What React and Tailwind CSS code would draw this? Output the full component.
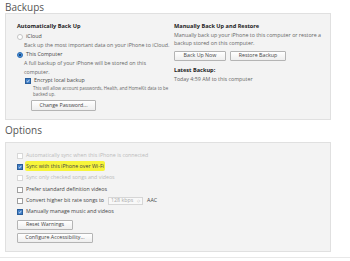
import React from "react";

const Radio = ({ checked }) =>
  checked ? (
    <span className="w-[6px] h-[6px] rounded-full bg-[#4a90d9] border border-[#2f6fb5] flex items-center justify-center shrink-0">
      <span className="w-[2px] h-[2px] rounded-full bg-[#12335a]" />
    </span>
  ) : (
    <span className="w-[6px] h-[6px] rounded-full bg-white border border-[#c4c4c4] shrink-0" />
  );

const Check = ({ checked, disabled }) =>
  checked ? (
    <span className="w-[6px] h-[6px] bg-[#3f7fc9] border border-[#2b5e9a] flex items-center justify-center shrink-0">
      <svg viewBox="0 0 8 8" className="w-[6px] h-[6px]">
        <path d="M1.3 4.2 L3.2 6 L6.8 1.6" fill="none" stroke="#fff" strokeWidth="1.5" />
      </svg>
    </span>
  ) : (
    <span
      className={`w-[6px] h-[6px] bg-white border shrink-0 ${
        disabled ? "border-[#d8d8d8]" : "border-[#a0a0a0]"
      }`}
    />
  );

const Btn = ({ children, className = "" }) => (
  <div
    className={`h-[10px] flex items-center justify-center border border-[#b4b4b4] bg-gradient-to-b from-white to-[#eeeeee] text-[#444] text-[5.3px] rounded-[1px] ${className}`}
  >
    {children}
  </div>
);

const OptRow = ({ checked, disabled, children }) => (
  <div className="flex items-center gap-[3px] h-[11.3px]">
    <Check checked={checked} disabled={disabled} />
    <div className={disabled ? "text-[#bbbbbb]" : "text-[#444]"}>{children}</div>
  </div>
);

export default function App() {
  return (
    <div
      className="w-[350px] h-[261px] bg-white overflow-hidden text-[5.3px] text-[#555]"
      style={{ fontFamily: '"Open Sans", "Noto Sans", sans-serif' }}
    >
      <div className="pl-[5px] pt-[2px] text-[10px] leading-[11px] text-[#555]">Backups</div>

      <div className="ml-[5px] w-[326px] h-[107px] bg-[#f3f3f3] border border-[#e0e0e0] flex pl-[11px] pt-[8px]">
        <div className="w-[157px] flex flex-col">
          <div className="font-bold text-[5.6px] leading-[8px] text-[#222]">Automatically Back Up</div>
          <div className="flex items-center gap-[3px] mt-[3px] h-[8px]">
            <Radio />
            <span className="text-[#444]">iCloud</span>
          </div>
          <div className="pl-[7px] leading-[8px] text-[#666]">
            Back up the most important data on your iPhone to iCloud.
          </div>
          <div className="flex items-center gap-[3px] mt-[2px] h-[8px]">
            <Radio checked />
            <span className="text-[#444]">This Computer</span>
          </div>
          <div className="pl-[7px] leading-[8.5px] text-[#666] pr-[20px]">
            A full backup of your iPhone will be stored on this computer.
          </div>
          <div className="flex items-center gap-[3px] ml-[8px] mt-[1px] h-[8px]">
            <Check checked />
            <span className="text-[#444]">Encrypt local backup</span>
          </div>
          <div className="pl-[16px] text-[4.4px] leading-[6px] text-[#666] pr-[2px]">
            This will allow account passwords, Health, and HomeKit data to be backed up.
          </div>
          <Btn className="ml-[14px] mt-[3px] w-[65px] h-[11px]">Change Password...</Btn>
        </div>

        <div className="flex-1 flex flex-col">
          <div className="font-bold text-[5.6px] leading-[8px] text-[#222]">Manually Back Up and Restore</div>
          <div className="leading-[8px] text-[#666] pr-[8px] mt-[1px]">
            Manually back up your iPhone to this computer or restore a backup stored on this computer.
          </div>
          <div className="flex gap-[4px] mt-[4px]">
            <Btn className="w-[52px]">Back Up Now</Btn>
            <Btn className="w-[56px]">Restore Backup</Btn>
          </div>
          <div className="font-bold text-[5.6px] leading-[8px] text-[#222] mt-[5px]">Latest Backup:</div>
          <div className="leading-[8px] text-[#666] mt-[1px]">Today 4:59 AM to this computer</div>
        </div>
      </div>

      <div className="pl-[5px] mt-[5px] text-[10px] leading-[11px] text-[#555]">Options</div>

      <div className="ml-[5px] mt-[6px] w-[326px] h-[110px] bg-[#f3f3f3] border border-[#e0e0e0] pl-[11px] pt-[7px] flex flex-col">
        <OptRow disabled>Automatically sync when this iPhone is connected</OptRow>
        <OptRow checked>
          <span className="bg-[#f7f53a] rounded-[2px] px-[1px] -mx-[1px] py-[1px]">Sync with this iPhone over Wi-Fi</span>
        </OptRow>
        <OptRow disabled>Sync only checked songs and videos</OptRow>
        <OptRow>Prefer standard definition videos</OptRow>
        <OptRow>
          <span className="flex items-center gap-[4px]">
            Convert higher bit rate songs to
            <span className="w-[35px] h-[8px] border border-[#d6d6d6] bg-[#f8f8f8] text-[#aaa] flex items-center justify-between px-[2px] whitespace-nowrap">
              <span>128 kbps</span>
              <span className="text-[4px]">◇</span>
            </span>
            AAC
          </span>
        </OptRow>
        <OptRow checked>Manually manage music and videos</OptRow>
        <Btn className="mt-[2px] w-[56px] h-[9px]">Reset Warnings</Btn>
        <Btn className="mt-[3px] w-[76px] h-[9px]">Configure Accessibility...</Btn>
      </div>

      <div className="mt-[5px] h-[1px] bg-[#e8e8e8]" />
    </div>
  );
}
